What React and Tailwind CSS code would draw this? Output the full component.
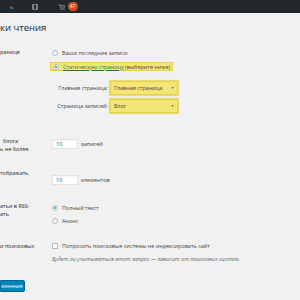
import React from 'react';
import { ShoppingCart } from 'lucide-react';

function Radio({ checked }) {
    return (
        <span className="w-[6px] h-[6px] rounded-full border border-[#b4b9be] bg-white flex items-center justify-center shrink-0 shadow-[inset_0_1px_1px_rgba(0,0,0,0.1)]">
            {checked && <span className="w-[2px] h-[2px] rounded-full bg-[#1e8cbe]" />}
        </span>
    );
}

function Select({ value }) {
    return (
        <div className="w-[68px] h-[14px] bg-[#f4e577] border border-[#e6d24a] shadow-[0_0_1px_1px_rgba(230,210,74,0.7)] flex items-center justify-between px-[3px]">
            <span>{value}</span>
            <span className="text-[3px] text-[#333]">▼</span>
        </div>
    );
}

function NumInput({ unit }) {
    return (
        <div className="flex items-center gap-[3px]">
            <div className="w-[26px] h-[10px] bg-white border border-[#e2e2e2] flex items-center px-[3px] shadow-[inset_0_1px_1px_rgba(0,0,0,0.05)]">10</div>
            <span>{unit}</span>
        </div>
    );
}

export default function App() {
    return (
        <div className="w-[300px] h-[300px] overflow-hidden bg-[#f1f1f1] text-[#444] text-[5.5px] leading-[8px]" style={{ fontFamily: '"Open Sans", "Liberation Sans", sans-serif' }}>
            {/* admin bar */}
            <div className="h-[13px] bg-[#23282d] flex items-center text-[#9ea3a8]">
                <span className="ml-[10px] text-[6px]">ь</span>
                <svg className="ml-[18px]" width="6" height="6" viewBox="0 0 6 6">
                    <rect x="0" y="0" width="6" height="6" rx="1" fill="#7d8287" />
                    <rect x="2" y="1" width="2" height="4" fill="#23282d" />
                </svg>
                <ShoppingCart className="ml-[21px] w-[6px] h-[6px]" strokeWidth={3} />
                <span className="ml-[3px] w-[10px] h-[9px] rounded-full bg-[#d54e21] text-white text-[5px] leading-[9px] text-center">47</span>
            </div>

            {/* title */}
            <h1 className="mt-[9px] h-[12px] text-[9.5px] leading-[12px] text-[#23282d]">ки чтения</h1>

            {/* front page */}
            <div className="mt-[14px] flex">
                <div className="w-[52px] text-[#23282d]">раницe</div>
                <div className="flex flex-col">
                    <div className="h-[9px] flex items-center gap-[4px]">
                        <Radio />
                        <span>Ваши последние записи</span>
                    </div>
                    <div className="mt-[5px] -ml-[2px] h-[9px] pl-[2px] pr-[2px] bg-[#f4e577] border border-[#e6d24a] flex items-center gap-[4px] w-fit">
                        <Radio checked />
                        <span><span className="text-[#2b6f56] underline">Статическую страницу</span> (выберите ниже)</span>
                    </div>
                    <div className="mt-[10px] flex items-center">
                        <span className="w-[58px] text-right pr-[2px]">Главная страница:</span>
                        <Select value="Главная страница" />
                    </div>
                    <div className="mt-[4px] flex items-center">
                        <span className="w-[58px] text-right pr-[2px]">Страница записей:</span>
                        <Select value="Блог" />
                    </div>
                </div>
            </div>

            {/* posts per page */}
            <div className="mt-[24px] flex">
                <div className="w-[52px] text-[#23282d] flex flex-col">
                    <span className="pl-[3px]">блога</span>
                    <span>ь не более</span>
                </div>
                <div className="mt-[2px]">
                    <NumInput unit="записей" />
                </div>
            </div>

            {/* rss items */}
            <div className="mt-[16px] flex">
                <div className="w-[52px] text-[#23282d]">тображать</div>
                <div className="mt-[6px]">
                    <NumInput unit="элементов" />
                </div>
            </div>

            {/* rss content */}
            <div className="mt-[17px] flex">
                <div className="w-[52px] text-[#23282d] flex flex-col">
                    <span>атьи в RSS-</span>
                    <span>ать</span>
                </div>
                <div className="mt-[2px] flex flex-col gap-[5px]">
                    <div className="h-[8px] flex items-center gap-[4px]">
                        <Radio checked />
                        <span>Полный текст</span>
                    </div>
                    <div className="h-[8px] flex items-center gap-[4px]">
                        <Radio />
                        <span>Анонс</span>
                    </div>
                </div>
            </div>

            {/* search engines */}
            <div className="mt-[17px] flex">
                <div className="w-[52px] text-[#23282d]">и поисковых</div>
                <div className="flex flex-col">
                    <div className="h-[8px] flex items-center gap-[4px]">
                        <span className="w-[6px] h-[6px] border border-[#b4b9be] bg-white shrink-0" />
                        <span>Попросить поисковые системы не индексировать сайт</span>
                    </div>
                    <p className="mt-[5px] italic text-[#666]">Будет ли учитываться этот запрос — зависит от поисковых систем.</p>
                </div>
            </div>

            {/* submit */}
            <button className="mt-[17px] h-[12px] w-[25px] bg-[#0085ba] border border-[#006799] rounded-r-[2px] text-white text-[5px] leading-[10px] text-right pr-[2px] overflow-hidden">менения</button>
        </div>
    );
}
